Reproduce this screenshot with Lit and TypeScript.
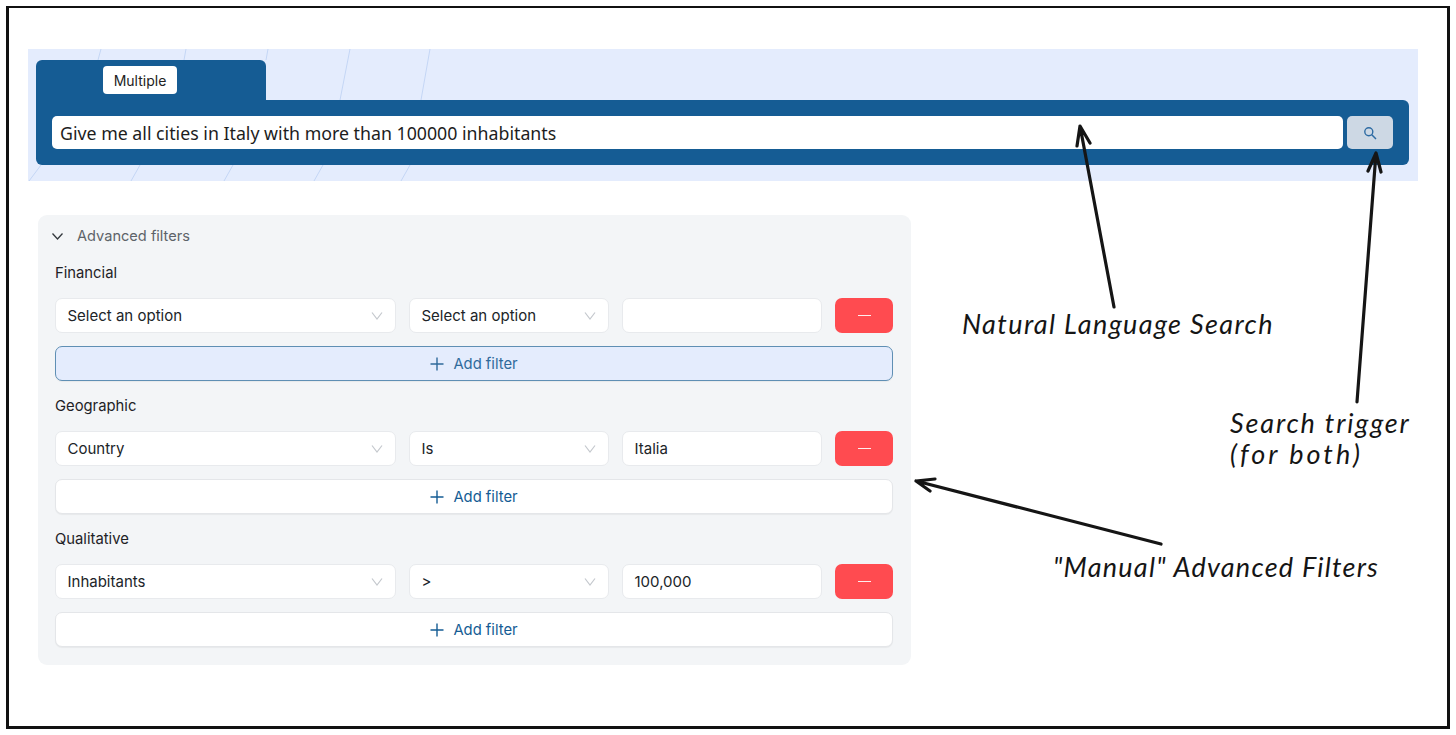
import { LitElement, html, css, svg } from "lit";
import { customElement } from "lit/decorators.js";

const chevron = html`<svg class="chev" viewBox="0 0 14 10" width="14" height="10"><path d="M2 1.5 7 8l5-6.5" fill="none" stroke="#c4c8cd" stroke-width="1.2"/></svg>`;

const groups = [
  { label: "Financial", a: "Select an option", b: "Select an option", v: "", active: true },
  { label: "Geographic", a: "Country", b: "Is", v: "Italia", active: false },
  { label: "Qualitative", a: "Inhabitants", b: ">", v: "100,000", active: false },
];

const heroLines = [
  [101, 0, 98, 11], [186, 0, 184, 11], [268, 0, 266, 11], [350, 0, 340, 51], [430, 0, 421, 51],
  [41, 116, 29, 132], [140, 116, 131, 132], [233, 116, 224, 132], [323, 116, 314, 132], [410, 116, 401, 132],
];

@customElement("app-root")
export class AppRoot extends LitElement {
  static styles = css`
    :host { display: block; height: 735px; box-sizing: border-box; padding: 6px; background: #fff; font-family: "Inter", "Liberation Sans", sans-serif; color: #1f2328; }
    .frame { position: relative; box-sizing: border-box; height: 723px; border: 3px solid #111; border-top-width: 2px; padding: 41px 29px 0 19px; background: #fff; }
    .hero { position: relative; box-sizing: border-box; height: 132px; background: #e4ecfd; padding: 11px 9px 16px 8px; }
    .lines { position: absolute; inset: 0; width: 100%; height: 100%; }
    .searchbox { position: relative; }
    .tab { box-sizing: border-box; width: 230px; height: 40px; background: #155c94; border-radius: 6px 6px 0 0; padding: 6px 0 0 67px; }
    .mode { box-sizing: border-box; width: 74px; height: 28px; background: #fff; border-radius: 4px; font-size: 14px; display: flex; align-items: center; justify-content: center; color: #222; }
    .bar { height: 65px; box-sizing: border-box; background: #155c94; border-radius: 0 6px 6px 6px; padding: 16px; display: flex; gap: 4px; }
    .query { flex: 1; box-sizing: border-box; height: 33px; background: #fff; border-radius: 5px; padding-left: 8px; display: flex; align-items: center; font-family: "Noto Sans", sans-serif; font-size: 17.75px; color: #1d1d1d; }
    .go { width: 46px; height: 33px; background: #cdd8e4; border-radius: 5px; display: flex; align-items: center; justify-content: center; }
    .panel { box-sizing: border-box; width: 873px; height: 450px; margin: 34px 0 0 10px; background: #f3f5f7; border-radius: 9px; padding: 11px 18px 18px 17px; }
    .head { height: 20px; display: flex; align-items: center; gap: 13px; font-size: 14.6px; color: #5d6369; margin: 0 0 17px -4px; }
    .group { margin-bottom: 15px; }
    .group:last-child { margin-bottom: 0; }
    .label { height: 20px; line-height: 20px; font-size: 14.8px; color: #1e2226; margin-bottom: 15px; }
    .row { display: grid; grid-template-columns: 341px 200px 200px 58px; column-gap: 13px; height: 35px; margin-bottom: 13px; }
    .field { box-sizing: border-box; background: #fff; border: 1px solid #e8eaed; border-radius: 7px; display: flex; align-items: center; justify-content: space-between; padding: 0 11px 0 11.5px; font-size: 15px; color: #202428; }
    .minus { background: #ff4b50; border-radius: 7px; display: flex; align-items: center; justify-content: center; }
    .minus i { display: block; width: 13px; height: 1.5px; background: #fff; opacity: 0.9; }
    .add { box-sizing: border-box; height: 35px; background: #fff; border: 1px solid #e4e6e9; border-radius: 7px; display: flex; align-items: center; justify-content: center; gap: 9px; color: #155c94; font-size: 14.8px; box-shadow: 0 1px 1px rgba(0,0,0,.05); }
    .add.active { background: #e4ecfd; border-color: #5f8fb4; color: #2f6a9b; }
    .overlay { position: absolute; left: -9px; top: -8px; width: 1456px; height: 735px; pointer-events: none; }
    .note { position: absolute; font-family: "Lato", "Open Sans", sans-serif; font-style: italic; font-size: 27px; line-height: 31px; color: #151515; white-space: nowrap; }
    .n1 { left: 953px; top: 300px; letter-spacing: 1.37px; }
    .n2 { left: 1221px; top: 399px; letter-spacing: 1.85px; }
    .n2 span { letter-spacing: 3px; }
    .n3 { left: 1044px; top: 543px; letter-spacing: 1.24px; }
  `;

  private arrow(x1: number, y1: number, x2: number, y2: number, a: number[], b: number[]) {
    return svg`<path d="M${x1} ${y1}L${x2} ${y2}M${a[0]} ${a[1]}L${x2} ${y2}L${b[0]} ${b[1]}" fill="none" stroke="#151515" stroke-width="3.2" stroke-linecap="round" stroke-linejoin="round"/>`;
  }

  render() {
    return html`
      <div class="frame">
        <div class="hero">
          <svg class="lines" viewBox="0 0 1390 132" preserveAspectRatio="none">
            ${heroLines.map((l) => svg`<line x1=${l[0] - 28} y1=${l[1]} x2=${l[2] - 28} y2=${l[3]} stroke="#c4d6f5" stroke-width="1"/>`)}
          </svg>
          <div class="searchbox">
            <div class="tab"><div class="mode">Multiple</div></div>
            <div class="bar">
              <div class="query">Give me all cities in Italy with more than 100000 inhabitants</div>
              <div class="go">
                <svg width="14" height="14" viewBox="0 0 14 14"><circle cx="5.8" cy="5.8" r="4" fill="none" stroke="#2d6ba3" stroke-width="1.4"/><path d="M8.8 8.8 13 13" stroke="#2d6ba3" stroke-width="1.5"/></svg>
              </div>
            </div>
          </div>
        </div>
        <div class="panel">
          <div class="head">
            <svg width="13" height="9" viewBox="0 0 13 9"><path d="M1.5 1.5 6.5 7l5-5.5" fill="none" stroke="#33383d" stroke-width="1.3"/></svg>
            <span>Advanced filters</span>
          </div>
          ${groups.map((g) => html`
            <div class="group">
              <div class="label">${g.label}</div>
              <div class="row">
                <div class="field"><span>${g.a}</span>${chevron}</div>
                <div class="field"><span>${g.b}</span>${chevron}</div>
                <div class="field"><span>${g.v}</span></div>
                <div class="minus"><i></i></div>
              </div>
              <div class="add ${g.active ? "active" : ""}">
                <svg width="14" height="14" viewBox="0 0 14 14"><path d="M7 .5v13M.5 7h13" stroke="currentColor" stroke-width="1.4"/></svg>
                <span>Add filter</span>
              </div>
            </div>`)}
        </div>
        <svg class="overlay" viewBox="0 0 1456 735">
          ${this.arrow(1114, 307, 1080, 126, [1077, 146], [1090, 143])}
          ${this.arrow(1357, 402, 1376, 153, [1368, 171], [1381, 172])}
          ${this.arrow(1161, 544, 916, 481, [935, 479], [930, 491])}
        </svg>
        <div class="note n1">Natural Language Search</div>
        <div class="note n2">Search trigger<br /><span>(for both)</span></div>
        <div class="note n3">"Manual" Advanced Filters</div>
      </div>
    `;
  }
}
